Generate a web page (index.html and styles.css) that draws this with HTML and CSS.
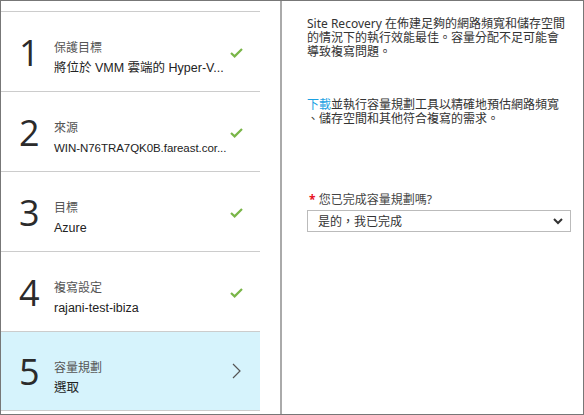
FILE: index.html
```html
<!DOCTYPE html>
<html lang="zh-Hant">
<head>
<meta charset="utf-8">
<link rel="stylesheet" href="styles.css">
</head>
<body>
<div class="frame">
  <div class="steps">
    <div class="step">
      <div class="num">1</div>
      <div class="info"><div class="title">保護目標</div><div class="sub">將位於 VMM 雲端的 Hyper-V...</div></div>
      <svg class="check" viewBox="0 0 13 10" width="13" height="10"><path d="M1 5 L4.6 8.4 L12 1" fill="none" stroke="#7ab648" stroke-width="2.2"/></svg>
    </div>
    <div class="step">
      <div class="num">2</div>
      <div class="info"><div class="title">來源</div><div class="sub long">WIN-N76TRA7QK0B.fareast.cor...</div></div>
      <svg class="check" viewBox="0 0 13 10" width="13" height="10"><path d="M1 5 L4.6 8.4 L12 1" fill="none" stroke="#7ab648" stroke-width="2.2"/></svg>
    </div>
    <div class="step">
      <div class="num">3</div>
      <div class="info"><div class="title">目標</div><div class="sub">Azure</div></div>
      <svg class="check" viewBox="0 0 13 10" width="13" height="10"><path d="M1 5 L4.6 8.4 L12 1" fill="none" stroke="#7ab648" stroke-width="2.2"/></svg>
    </div>
    <div class="step">
      <div class="num">4</div>
      <div class="info"><div class="title">複寫設定</div><div class="sub">rajani-test-ibiza</div></div>
      <svg class="check" viewBox="0 0 13 10" width="13" height="10"><path d="M1 5 L4.6 8.4 L12 1" fill="none" stroke="#7ab648" stroke-width="2.2"/></svg>
    </div>
    <div class="step active">
      <div class="num">5</div>
      <div class="info"><div class="title">容量規劃</div><div class="sub">選取</div></div>
      <svg class="chev" viewBox="0 0 9 16" width="9" height="16"><path d="M1 1 L8 8 L1 15" fill="none" stroke="#555" stroke-width="1.2"/></svg>
    </div>
  </div>
  <div class="detail">
    <p class="para">Site Recovery 在佈建足夠的網路頻寬和儲存空間的情況下的執行效能最佳。容量分配不足可能會導致複寫問題。</p>
    <p class="para second"><a class="link">下載</a>並執行容量規劃工具以精確地預估網路頻寬、儲存空間和其他符合複寫的需求。</p>
    <div class="label"><span class="req">*</span> 您已完成容量規劃嗎?</div>
    <div class="select">
      <span>是的，我已完成</span>
      <svg viewBox="0 0 10 7" width="10" height="7"><path d="M1 1 L5 5 L9 1" fill="none" stroke="#333" stroke-width="2"/></svg>
    </div>
  </div>
</div>
</body>
</html>
```

FILE: styles.css
```css
* { box-sizing: border-box; }
html, body { margin: 0; padding: 0; background: #fff; }
body {
  font-family: "Noto Sans", "Noto Sans CJK TC", sans-serif;
  font-size: 12px;
  color: #333;
}
.frame {
  width: 584px;
  height: 415px;
  border: 1px solid #777;
  display: flex;
}
.steps {
  width: 281px;
  flex: none;
  padding-top: 10px;
  border-right: 2px solid #aaa;
}
.step {
  width: 259px;
  height: 80px;
  border-top: 1px solid #ccc;
  display: flex;
  align-items: center;
}
.step.active {
  background: #d6f3fc;
  border-bottom: 1px solid #ccc;
}
.num {
  flex: none;
  font-family: "Open Sans", "Noto Sans", sans-serif;
  font-weight: 400;
  font-size: 36px;
  line-height: 1;
  color: #2b2b2b;
  width: 53px;
  padding-left: 18px;
  margin-top: 2px;
}
.info { flex: 1; min-width: 0; margin-top: 14px; }
.title {
  font-size: 12px;
  line-height: 18px;
  color: #555;
}
.sub {
  font-family: "Liberation Sans", "Noto Sans CJK TC", sans-serif;
  font-size: 12.5px;
  line-height: 20px;
  margin-top: 1px;
  color: #222;
  white-space: nowrap;
}
.sub.long { font-size: 11.5px; letter-spacing: -0.05px; }
.check { flex: none; margin-right: 17px; margin-left: 4px; margin-top: 2px; }
.chev { flex: none; margin-right: 19px; margin-left: 4px; }
.detail {
  flex: 1;
  padding: 16px 10px 0 25px;
}
.para {
  margin: 0;
  width: 262px;
  line-height: 14px;
  font-size: 12px;
  color: #333;
}
.para.second { margin-top: 39px; line-break: anywhere; }
.link { color: #1ba1e2; }
.label {
  margin-top: 66px;
  line-height: 16px;
  color: #444;
}
.req { color: #e81123; font-weight: bold; margin-left: 2px; }
.select {
  margin-top: 2px;
  width: 264px;
  height: 22px;
  border: 1px solid #bbb;
  display: flex;
  align-items: center;
  justify-content: space-between;
  padding: 0 7px 0 10px;
  color: #333;
}
```
